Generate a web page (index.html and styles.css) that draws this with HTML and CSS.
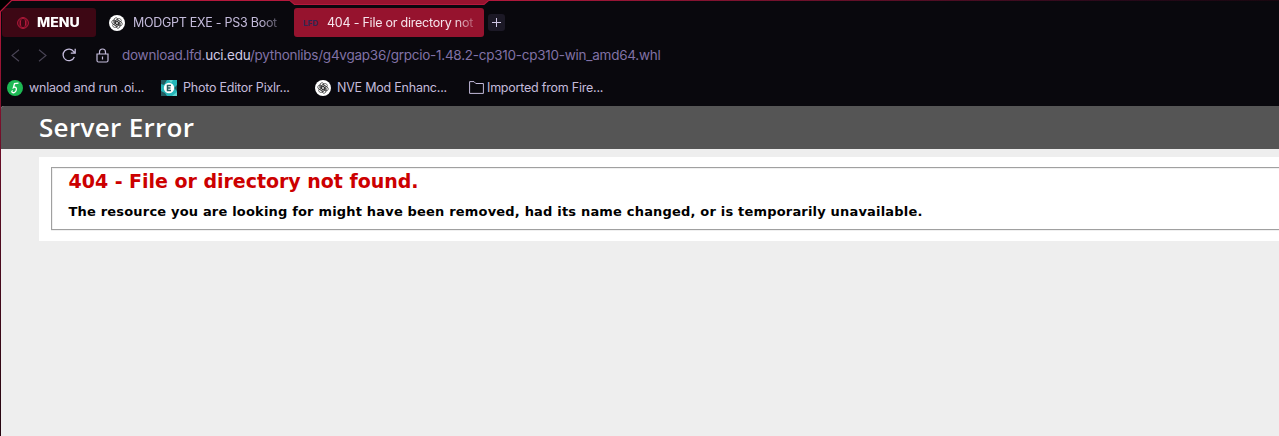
FILE: index.html
```html
<!DOCTYPE html>
<html lang="en">
<head>
<meta charset="utf-8">
<title>404 - File or directory not found.</title>
<link rel="stylesheet" href="styles.css">
</head>
<body>
<svg width="0" height="0" class="defs" aria-hidden="true">
  <symbol id="knot" viewBox="0 0 16 16">
    <circle cx="8" cy="8" r="8" fill="#fff"/>
    <g fill="none" stroke="#222" stroke-width=".65">
      <path id="petal" d="M6.600 8.800V5.400L9.300 3.900A2 2 0 0 1 12 6.700M6.600 7.200L9.500 5.500L12.300 7.200"/>
      <use href="#petal" transform="rotate(60 8 8)"/>
      <use href="#petal" transform="rotate(120 8 8)"/>
      <use href="#petal" transform="rotate(180 8 8)"/>
      <use href="#petal" transform="rotate(240 8 8)"/>
      <use href="#petal" transform="rotate(300 8 8)"/>
    </g>
  </symbol>
</svg>
<div class="window">
  <svg class="frame" width="1279" height="436" viewBox="0 0 1279 436">
    <defs>
      <linearGradient id="edge" gradientUnits="userSpaceOnUse" x1="480" y1="0" x2="1279" y2="0"><stop offset="0" stop-color="#b5183c"/><stop offset=".8" stop-color="#28091a"/><stop offset="1" stop-color="#1a0710"/></linearGradient>
      <linearGradient id="side" gradientUnits="userSpaceOnUse" x1="0" y1="10" x2="0" y2="436"><stop offset="0" stop-color="#b5183c"/><stop offset=".4" stop-color="#5c0c23"/><stop offset="1" stop-color="#24050f"/></linearGradient>
    </defs>
    <path d="M0 0H12L0 12Z" fill="#000"/>
    <path d="M290 0L294.500 4.500H484L488.500 0Z" fill="#96132e"/>
    <path d="M.5 11.500L11.500 .5H290L294.500 4.500H484L488.500 .5" fill="none" stroke="#b5183c" stroke-width="1.200"/>
    <path d="M488 0H1279V1H488Z" fill="url(#edge)"/>
    <path d="M0 11H1V436H0Z" fill="url(#side)"/>
  </svg>
  <header class="chrome">
    <div class="tabs">
      <div class="menu">
        <svg width="12" height="12" viewBox="0 0 12 12" fill="none" stroke="#c51c41" stroke-width=".9"><circle cx="6" cy="6" r="5.400"/><ellipse cx="6" cy="6" rx="2.600" ry="4.900"/><path d="M2.300 2.500V9.500M9.700 2.500V9.500" stroke-width=".5"/></svg>
        <span class="menu-label">MENU</span>
      </div>
      <div class="tab">
        <svg width="16" height="16"><use href="#knot"/></svg>
        <span class="tab-title">MODGPT EXE - PS3 Boot</span>
      </div>
      <div class="tab active">
        <span class="lfd">LFD</span>
        <span class="tab-title">404 - File or directory not</span>
      </div>
      <div class="add"><svg width="9" height="9" viewBox="0 0 9 9" stroke="#d0c8e4"><path d="M4.500 0V9M0 4.500H9"/></svg></div>
    </div>
    <div class="address">
      <svg class="nav" width="9" height="13" viewBox="0 0 9 13"><path d="M8 .8L1 6.500L8 12.200"/></svg>
      <svg class="nav" width="9" height="13" viewBox="0 0 9 13"><path d="M1 .8L8 6.500L1 12.200"/></svg>
      <svg class="reload" width="14" height="14" viewBox="0 0 14 14"><path d="M12.300 9A5.800 5.800 0 1 1 11.700 3.600L13 5M13.200 .8V5.200H8.800"/></svg>
      <svg class="lock" width="13" height="15" viewBox="0 0 13 15"><path d="M1 6H12V12.500Q12 14 10.500 14H2.500Q1 14 1 12.500ZM3.500 6V4A3 3 0 0 1 9.500 4V6M6.500 8.500V11.500"/></svg>
      <span class="url">download.lfd.<b>uci.edu</b>/pythonlibs/g4vgap36/grpcio-1.48.2-cp310-cp310-win_amd64.whl</span>
    </div>
    <nav class="bookmarks">
      <span class="bm"><svg width="16" height="16" viewBox="0 0 16 16"><circle cx="8" cy="8" r="8" fill="#1db954"/><path d="M11.500 3.200L7.500 3.700L6.400 7.600C8 6.700 9.600 7.300 9.400 9.200C9.200 11.800 6.700 13.500 5.200 12.300C4.400 11.600 5 10.700 5.900 11" fill="none" stroke="#fff" stroke-width="1.300"/></svg><span>wnlaod and run .oi...</span></span>
      <span class="bm"><svg width="16" height="16" viewBox="0 0 16 16"><path d="M0 0H16V16H0Z" fill="#25b5b8"/><path d="M0 0H6L3 5L0 4ZM16 5V11L13 8ZM0 11L4 13L6 16H0Z" fill="#225b60"/><path d="M8 0H12L10 3ZM11 16L16 12V16Z" fill="#61d5d0"/><circle cx="8" cy="8" r="5.200" fill="#fff"/><path d="M10 5.500H6.500V10.500H10M6.500 8H9.500" fill="none" stroke="#265b5e" stroke-width="1.500"/></svg><span>Photo Editor Pixlr...</span></span>
      <span class="bm"><svg width="16" height="16"><use href="#knot"/></svg><span>NVE Mod Enhanc...</span></span>
      <span class="bm folder"><svg width="15" height="13" viewBox="0 0 15 13"><path d="M.6 .6H5L6.800 2.500H14.400V12.400H.6Z" fill="none" stroke="#c4bbdb"/></svg><span>Imported from Fire...</span></span>
    </nav>
  </header>
  <main class="page">
    <div class="banner"><h1>Server Error</h1></div>
    <div class="content">
      <div class="notice">
        <h2>404 - File or directory not found.</h2>
        <h3>The resource you are looking for might have been removed, had its name changed, or is temporarily unavailable.</h3>
      </div>
    </div>
  </main>
</div>
</body>
</html>
```
FILE: styles.css
```css
* { box-sizing: border-box; }
body { margin: 0; background: #09080d; overflow: hidden; }
svg { display: block; flex: none; }
.defs { position: absolute; }
.window { position: relative; width: 1279px; height: 436px; overflow: hidden; }
.frame { position: absolute; inset: 0; pointer-events: none; }
.chrome { height: 106px; padding: 8px 0 0 2px; font-family: Inter, sans-serif; font-size: 12.5px; letter-spacing: -0.22px; color: #c4bbdb; white-space: nowrap; }
.tabs { display: flex; height: 29px; }
.menu { width: 94px; border-radius: 3px; background: #3d0714; display: flex; align-items: center; padding-left: 15px; gap: 8px; }
.menu-label { color: #fff; font-weight: 800; font-size: 12.5px; letter-spacing: 0; transform: scaleX(1.12); transform-origin: left; }
.tab { width: 187px; margin-left: 5px; padding-left: 8px; display: flex; align-items: center; gap: 8px; border-radius: 3px; }
.tab-title { width: 148px; letter-spacing: -0.27px; mask-image: linear-gradient(90deg, #000 86%, rgba(0, 0, 0, .25)); }
.active { width: 190px; margin-left: 6px; padding-left: 9px; gap: 7px; background: #96132e; color: #f6e4ec; }
.active .tab-title { letter-spacing: -0.23px; }
.lfd { width: 17px; font-size: 8px; font-weight: 700; letter-spacing: 0; color: #302753; }
.add { width: 17px; height: 17px; margin: 6px 0 0 4px; border-radius: 3px; background: #1c1926; display: grid; place-items: center; }
.address { height: 36px; display: flex; align-items: center; padding-left: 9px; }
.nav, .reload, .lock { fill: none; stroke: #4a4556; stroke-width: 1.1; }
.nav + .nav { margin-left: 18px; }
.reload { margin-left: 15px; stroke: #c4bbdb; stroke-width: 1.3; }
.lock { margin-left: 20px; stroke: #c4bbdb; stroke-width: 1.2; }
.url { margin: 0 0 1px 13px; font-size: 13.5px; letter-spacing: -0.25px; color: #8172a6; }
.url b { font-weight: 400; color: #d0c8e4; }
.bookmarks { height: 29px; display: flex; align-items: center; padding-left: 5px; }
.bm { width: 154px; display: flex; align-items: center; gap: 6px; }
.folder { gap: 3px; }
.page { height: 330px; margin-left: 1px; background: #eee; border-top-left-radius: 3px; overflow: hidden; }
.banner { height: 43px; background: #555; padding-left: 38px; }
h1, h2, h3 { margin: 0; white-space: nowrap; }
h1 { font: 650 26px/43px "Open Sans", sans-serif; letter-spacing: .33px; color: #fff; }
.content { margin: 8px 0 0 38px; height: 84px; padding: 10px 0 0 12px; background: #fff; }
.notice { height: 63px; border: 1px solid #a0a0a0; border-right: 0; box-shadow: 0 1px #f0f0f0, inset 1px 1px #f0f0f0; padding-left: 16.5px; font-family: Verdana, "DejaVu Sans", sans-serif; }
h2 { font-size: 19px; line-height: 27px; letter-spacing: -.03px; color: #c00; }
h3 { margin-top: 9px; font-size: 13px; line-height: 16px; letter-spacing: .185px; color: #000; }
```
